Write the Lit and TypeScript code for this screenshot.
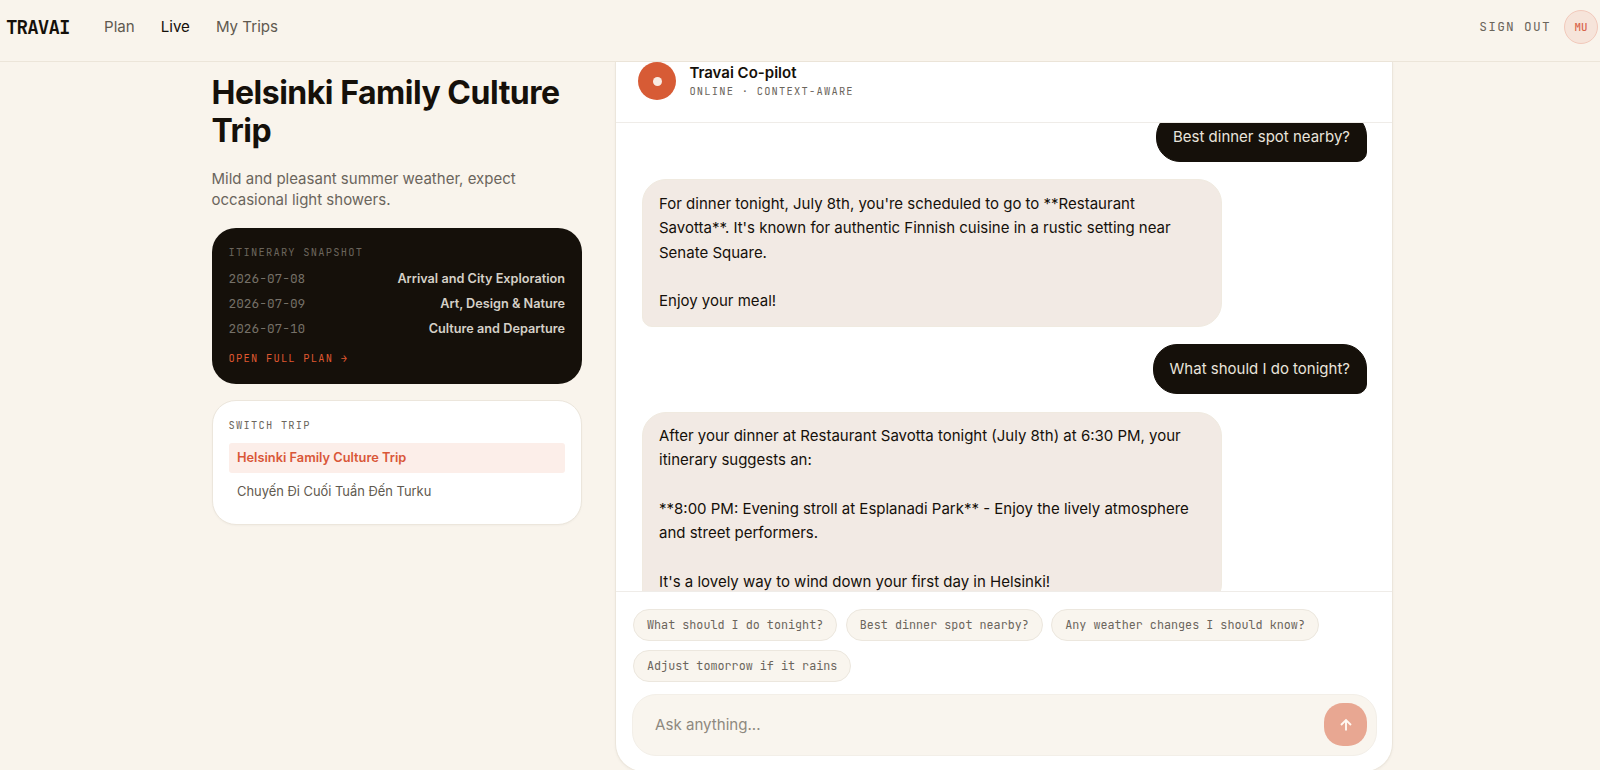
import { LitElement, html, css } from "lit"
import { customElement, property, state } from "lit/decorators.js"
import { classMap } from "lit/directives/class-map.js"

interface Message {
  role: "user" | "assistant"
  text: string
}

interface Day {
  date: string
  title: string
}

@customElement("travai-header")
export class TravaiHeader extends LitElement {
  static styles = css`
    :host {
      display: flex;
      align-items: center;
      box-sizing: border-box;
      height: 62px;
      padding: 0 2px 8px 6px;
      background: var(--cream);
      border-bottom: 1px solid #ece5d9;
    }

    .logo {
      font: 700 19.2px var(--mono);
      letter-spacing: -0.9px;
      margin-right: 35px;
      width: 63px;
    }

    nav {
      display: flex;
      flex: 1;
      gap: 26px;
      font-size: 15.1px;
      color: #5f594f;
    }

    .active {
      color: var(--ink);
    }

    .sign-out {
      font: 12.8px var(--mono);
      letter-spacing: 1.3px;
      color: #6b655b;
      margin-right: 13px;
    }

    .avatar {
      display: grid;
      place-items: center;
      box-sizing: border-box;
      width: 34px;
      height: 34px;
      border: 1px solid #f2c9bb;
      border-radius: 50%;
      background: #f6e4da;
      color: #d9654a;
      font: 500 10.8px var(--mono);
    }
  `

  @property() active = "Live"

  render() {
    return html`
      <div class="logo">TRAVAI</div>
      <nav>
        ${["Plan", "Live", "My Trips"].map(
          (item) => html`<span class=${classMap({ active: item === this.active })}>${item}</span>`
        )}
      </nav>
      <span class="sign-out">SIGN OUT</span>
      <div class="avatar">MU</div>
    `
  }
}

@customElement("trip-sidebar")
export class TripSidebar extends LitElement {
  static styles = css`
    :host {
      display: block;
      width: 370.5px;
      padding-top: 12px;
    }

    h1 {
      margin: 0;
      font-size: 32px;
      font-weight: 700;
      line-height: 38.4px;
      letter-spacing: -0.48px;
    }

    .weather {
      margin: 17px 0 17px;
      font-size: 15px;
      line-height: 21.4px;
      color: #6b655c;
    }

    .card {
      box-sizing: border-box;
      border-radius: 24px;
      padding: 16px 17px;
    }

    .snapshot {
      height: 156px;
      background: var(--ink);
      color: #d5d0c8;
    }

    .label {
      font: 10.4px/16px var(--mono);
      letter-spacing: 1.25px;
      color: #6b655c;
    }

    .day {
      display: flex;
      justify-content: space-between;
      align-items: center;
      height: 25.3px;
      font-size: 12.7px;
      font-weight: 600;
    }

    .date {
      font: 12.8px var(--mono);
      color: #757068;
    }

    .days {
      padding-top: 6px;
    }

    .open {
      margin-top: 8px;
      font: 10.4px/16px var(--mono);
      letter-spacing: 1.25px;
      color: #df5730;
    }

    .switch {
      height: 125px;
      margin-top: 16px;
      padding: 16px;
      border: 1px solid #ece6dc;
      background: #fff;
      box-shadow: 0 1px 2px rgba(21, 16, 10, 0.03);
    }

    .trips {
      display: grid;
      gap: 4px;
      padding-top: 10px;
    }

    .trip {
      height: 30px;
      padding: 0 8.5px;
      border-radius: 3px;
      font-size: 12.9px;
      line-height: 29px;
      color: #5f594f;
    }

    .trip.active {
      background: #fceee9;
      color: #d95738;
      font-size: 12.8px;
      font-weight: 600;
    }
  `

  @property({ type: Array }) days: Day[] = []
  @property({ type: Array }) trips: string[] = []
  @state() selected = 0

  render() {
    return html`
      <h1>${this.trips[this.selected]}</h1>
      <p class="weather">Mild and pleasant summer weather, expect occasional light showers.</p>
      <section class="card snapshot">
        <div class="label">ITINERARY SNAPSHOT</div>
        <div class="days">
          ${this.days.map(
            (day) => html`
              <div class="day"><span class="date">${day.date}</span><span>${day.title}</span></div>
            `
          )}
        </div>
        <div class="open">OPEN FULL PLAN →</div>
      </section>
      <section class="card switch">
        <div class="label">SWITCH TRIP</div>
        <div class="trips">
          ${this.trips.map(
            (trip, i) => html`
              <div
                class=${classMap({ trip: true, active: i === this.selected })}
                @click=${() => (this.selected = i)}
              >
                ${trip}
              </div>
            `
          )}
        </div>
      </section>
    `
  }
}

@customElement("copilot-chat")
export class CopilotChat extends LitElement {
  static styles = css`
    :host {
      display: flex;
      flex-direction: column;
      box-sizing: border-box;
      width: 778px;
      height: 710px;
      border: 1px solid #ece6dc;
      border-top: 0;
      border-radius: 0 0 28px 28px;
      background: #fff;
      box-shadow: 0 1px 3px rgba(21, 16, 10, 0.04);
    }

    .head {
      display: flex;
      gap: 13px;
      box-sizing: border-box;
      height: 61px;
      padding-left: 22px;
      border-bottom: 1px solid #efece8;
    }

    .orb {
      display: grid;
      place-items: center;
      width: 38.4px;
      height: 38.4px;
      border-radius: 50%;
      background: var(--orange);
    }

    .orb::after {
      content: "";
      width: 9px;
      height: 9px;
      border-radius: 50%;
      background: #f9ebe2;
    }

    .name {
      font-size: 15px;
      font-weight: 600;
      line-height: 22px;
    }

    .status {
      font: 10.4px/15px var(--mono);
      letter-spacing: 1.24px;
      color: #6b655c;
    }

    .log {
      flex: 1;
      min-height: 0;
      overflow: hidden;
    }

    .messages {
      display: flex;
      flex-direction: column;
      align-items: flex-start;
      gap: 17.2px;
      margin-top: -11px;
      padding: 0 25px 0 26px;
    }

    .bubble {
      box-sizing: border-box;
      max-width: 580px;
      padding: 11.5px 16px 12.5px;
      border: 1px solid #f0eae0;
      border-radius: 24px 24px 24px 10px;
      background: #f2eae4;
      font-size: 15px;
      line-height: 24.3px;
      white-space: pre-line;
    }

    .bubble.user {
      align-self: flex-end;
      border-color: var(--ink);
      border-radius: 24px 24px 10px 24px;
      background: var(--ink);
      color: #e9e4dc;
    }

    .compose {
      border-top: 1px solid #efece8;
      padding: 17px 15px 0 16px;
      height: 162px;
    }

    .chips {
      display: flex;
      flex-wrap: wrap;
      gap: 8.4px;
      padding-left: 1px;
    }

    .chip {
      box-sizing: border-box;
      height: 32.2px;
      padding: 0 13px;
      border: 1px solid #ece7de;
      border-radius: 17px;
      background: #f9f5ee;
      color: #6b655c;
      font: 11.76px/30px var(--mono);
    }

    .input {
      display: flex;
      align-items: center;
      box-sizing: border-box;
      height: 62px;
      margin-top: 12px;
      padding: 0 9px 0 22px;
      border: 1px solid #f3efe8;
      border-radius: 24px;
      background: #f9f5ee;
    }

    .placeholder {
      flex: 1;
      font-size: 15.1px;
      color: #8e897f;
    }

    .send {
      display: grid;
      place-items: center;
      width: 43px;
      height: 43px;
      border-radius: 19px;
      background: #e8a792;
    }
  `

  @property({ type: Array }) messages: Message[] = []
  @property({ type: Array }) prompts: string[] = []

  render() {
    return html`
      <div class="head">
        <div class="orb"></div>
        <div>
          <div class="name">Travai Co-pilot</div>
          <div class="status">ONLINE · CONTEXT-AWARE</div>
        </div>
      </div>
      <div class="log">
        <div class="messages">
          ${this.messages.map(
            (m) => html`<div class=${classMap({ bubble: true, user: m.role === "user" })}>${m.text}</div>`
          )}
        </div>
      </div>
      <div class="compose">
        <div class="chips">
          ${this.prompts.map((prompt) => html`<span class="chip">${prompt}</span>`)}
        </div>
        <div class="input">
          <span class="placeholder">Ask anything...</span>
          <div class="send">
            <svg width="16" height="16" viewBox="0 0 16 16" fill="none" stroke="#fff8f2" stroke-width="1.9">
              <path d="M8 13.5V3M3 8 8 3 13 8" />
            </svg>
          </div>
        </div>
      </div>
    `
  }
}

@customElement("app-root")
export class AppRoot extends LitElement {
  static styles = css`
    :host {
      --cream: #f9f4ec;
      --ink: #15100a;
      --orange: #d75b35;
      --mono: "JetBrains Mono", "DejaVu Sans Mono", "Liberation Mono", monospace;
      display: flex;
      flex-direction: column;
      height: 770px;
      overflow: hidden;
      background: var(--cream);
      color: var(--ink);
      font-family: Inter, "Liberation Sans", sans-serif;
    }

    main {
      display: flex;
      align-items: flex-start;
      gap: 33px;
      flex: 1;
      min-height: 0;
      padding-left: 211.5px;
    }
  `

  days: Day[] = [
    { date: "2026-07-08", title: "Arrival and City Exploration" },
    { date: "2026-07-09", title: "Art, Design & Nature" },
    { date: "2026-07-10", title: "Culture and Departure" },
  ]

  trips = ["Helsinki Family Culture Trip", "Chuyến Đi Cuối Tuần Đến Turku"]

  messages: Message[] = [
    { role: "user", text: "Best dinner spot nearby?" },
    {
      role: "assistant",
      text: "For dinner tonight, July 8th, you're scheduled to go to **Restaurant Savotta**. It's known for authentic Finnish cuisine in a rustic setting near Senate Square.\n\nEnjoy your meal!",
    },
    { role: "user", text: "What should I do tonight?" },
    {
      role: "assistant",
      text: "After your dinner at Restaurant Savotta tonight (July 8th) at 6:30 PM, your itinerary suggests an:\n\n**8:00 PM: Evening stroll at Esplanadi Park** - Enjoy the lively atmosphere and street performers.\n\nIt's a lovely way to wind down your first day in Helsinki!",
    },
  ]

  prompts = [
    "What should I do tonight?",
    "Best dinner spot nearby?",
    "Any weather changes I should know?",
    "Adjust tomorrow if it rains",
  ]

  render() {
    return html`
      <travai-header></travai-header>
      <main>
        <trip-sidebar .days=${this.days} .trips=${this.trips}></trip-sidebar>
        <copilot-chat .messages=${this.messages} .prompts=${this.prompts}></copilot-chat>
      </main>
    `
  }
}
